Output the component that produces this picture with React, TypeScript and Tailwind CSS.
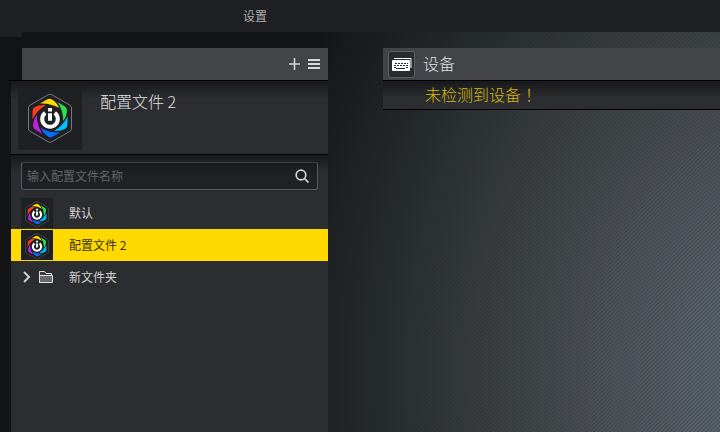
import { useState } from "react";

const BLADES = [
  { color: "#ffd900", angle: "rotate(0 32 32)" },
  { color: "#2be04a", angle: "rotate(60 32 32)" },
  { color: "#00bfff", angle: "rotate(120 32 32)" },
  { color: "#0a6cff", angle: "rotate(180 32 32)" },
  { color: "#c020e0", angle: "rotate(240 32 32)" },
  { color: "#ff3b1f", angle: "rotate(300 32 32)" },
];

function ProfileLogo({ className, viewBox, outline }: { className: string; viewBox: string; outline: string }) {
  return (
    <svg viewBox={viewBox} className={className} aria-hidden="true">
      <path
        d="M30.5 8.6Q32 7.8 33.5 8.6L52 19.2Q53.5 20 53.5 21.8V42.7Q53.5 44.5 52 45.3L33.5 55.9Q32 56.7 30.5 55.9L12 45.3Q10.5 44.5 10.5 42.7V21.8Q10.5 20 12 19.2Z"
        fill="none"
        stroke={outline}
        strokeWidth="1"
      />
      {BLADES.map((b) => (
        <path
          key={b.color}
          d="M22 17.500L29.5 13.3Q31.5 12.3 33.5 13.3Q38.500 16 41.200 22Q32 16.800 22 17.500Z"
          fill={b.color}
          transform={b.angle}
        />
      ))}
      <path d="M27.200 26.800A7.800 7.800 0 1 0 36.800 26.800" fill="none" stroke="#fff" strokeWidth="4" />
      <path d="M30 22h4v3.500h-4zM30 27.200h4v7.600h-4z" fill="#fff" />
    </svg>
  );
}

function FolderIcon() {
  return (
    <svg viewBox="0 0 14 12" className="h-3 w-3.5" aria-hidden="true">
      <path d="M.5 11.500V.5H5.500l1.500 2h5.500v9Z" fill="#3a3b3e" stroke="#e2e2e2" />
      <path d="M.5 4.500h13v7H.5z" fill="#67686b" stroke="#e2e2e2" />
    </svg>
  );
}

function KeyboardIcon() {
  return (
    <svg viewBox="0 0 21 13" className="h-[13px] w-[21px]" aria-hidden="true">
      <path d="M3 .5h17v9.500" fill="none" stroke="#fff" />
      <rect x="1" y="2" width="18" height="11" rx="1" fill="#fff" />
      <path d="M4 5.500h13M3 7.500h14" stroke="#2a2b2e" strokeDasharray="2 1" />
      <path d="M3 9.500h2M5 10.500h9M15 9.500h2" stroke="#2a2b2e" />
    </svg>
  );
}

const profiles = [
  { id: "default", name: "默认" },
  { id: "profile-2", name: "配置文件 2" },
];

export default function App() {
  const [selected, setSelected] = useState("profile-2");
  return (
    <div className="flex min-h-screen flex-col bg-[linear-gradient(135deg,rgba(0,0,0,0.09)_25%,transparent_25%,transparent_50%,rgba(0,0,0,0.09)_50%,rgba(0,0,0,0.09)_75%,transparent_75%),radial-gradient(ellipse_78%_158%_at_111%_86%,#5f676f_0%,#58616a_14%,#4c5057_36%,#43484b_45%,#393d40_57%,#2a2f31_72%,#1f2224_86%,#131415_100%)] bg-[length:4px_4px,auto] font-['Noto_Sans_CJK_SC',sans-serif] text-[#d0d1d2]">
      <nav className="flex h-8 shrink-0 bg-[#1f2023]">
        <button className="ml-[243px] text-xs text-[#adaeb0]">设置</button>
      </nav>
      <div className="flex flex-1">
        <aside className="flex w-[328px] shrink-0 flex-col">
          <div className="h-4">
            <div className="h-[5px] w-[22px] bg-[#1f2023]" />
          </div>
          <header className="ml-[22px] flex h-8 items-center justify-end gap-2 bg-[#434447] pr-2">
            <button aria-label="添加配置文件">
              <svg viewBox="0 0 12 12" className="size-3" aria-hidden="true">
                <path d="M6.500 0v12M1 6h11" stroke="#d8d8d6" strokeWidth="1.500" />
              </svg>
            </button>
            <button aria-label="菜单">
              <svg viewBox="0 0 12 10" className="h-2.5 w-3" aria-hidden="true">
                <path d="M0 1h12M0 5h12M0 9h12" stroke="#d8d8d6" strokeWidth="2" />
              </svg>
            </button>
          </header>
          <div className="ml-[9px] h-px bg-black" />
          <div className="ml-[11px] flex flex-1 flex-col bg-[#2c2d30]">
            <section className="flex gap-[18px] border-b border-black bg-linear-to-b from-[#18191a] to-[#2c2d30] to-25% px-[7px] pt-[5px] pb-1">
              <ProfileLogo viewBox="0 0 64 64" outline="#77787b" className="size-16 shrink-0 bg-[#1f2023]" />
              <h1 className="pt-[3px] text-base leading-6 font-light text-[#e0e1e2]">配置文件 2</h1>
            </section>
            <section className="bg-[linear-gradient(#18191a,#2c2d30_18px)] pt-[7px]">
              <label className="mx-2.5 flex h-7 items-center rounded-[3px] border border-[#5a5b5e] border-t-[#404144] bg-linear-to-b from-[#191a1c] to-[#202125] to-50% pr-2 pl-[5px]">
                <input
                  aria-label="搜索配置文件"
                  placeholder="输入配置文件名称"
                  className="min-w-0 flex-1 bg-transparent text-xs text-[#d0d1d2] outline-none placeholder:text-[#626366]"
                />
                <svg viewBox="0 0 14 14" className="size-3.5" fill="none" stroke="#d4d4d4" strokeWidth="1.700" aria-hidden="true">
                  <circle cx="6" cy="6" r="4.800" />
                  <path d="m9.500 9.500 4 4" />
                </svg>
              </label>
              <ul className="pt-[7px] text-xs">
                {profiles.map((p) => (
                  <li key={p.id}>
                    <button
                      onClick={() => setSelected(p.id)}
                      aria-pressed={selected === p.id}
                      className={
                        selected === p.id
                          ? "flex h-8 w-full items-center gap-4 bg-[#ffda00] pl-2.5 text-[#3a3305]"
                          : "flex h-8 w-full items-center gap-4 pl-2.5"
                      }
                    >
                      <ProfileLogo viewBox="2 2 60 56" outline="#5c5d60" className="h-[30px] w-8 bg-[#1f2023]" />
                      <span>{p.name}</span>
                    </button>
                  </li>
                ))}
                <li>
                  <button className="flex h-8 w-full items-center pl-3">
                    <svg viewBox="0 0 8 12" className="mr-2 h-3 w-2" fill="none" stroke="#d0d0d0" strokeWidth="2" aria-hidden="true">
                      <path d="m1 1 5 5-5 5" />
                    </svg>
                    <FolderIcon />
                    <span className="ml-4">新文件夹</span>
                  </button>
                </li>
              </ul>
            </section>
          </div>
        </aside>
        <main className="ml-[55px] flex-1 pt-4">
          <header className="flex h-[33px] items-center gap-2 border-b border-black bg-[#434447] pl-[5px]">
            <span className="flex size-[27px] items-center justify-center rounded-[3px] border border-[#5e5f62] bg-[#2a2b2e]">
              <KeyboardIcon />
            </span>
            <h2 className="pb-0.5 text-base leading-6 font-light text-[#e0e1e2]">设备</h2>
          </header>
          <p className="border-b border-black bg-linear-to-b from-[#18191a] to-[#2c2d30] to-60% pt-px pb-[3px] pl-[42px] text-base leading-6 font-light text-[#d8b90a]">
            未检测到设备<span className="font-['Noto_Sans_CJK_TC',sans-serif] leading-none">！</span>
          </p>
        </main>
      </div>
    </div>
  );
}
